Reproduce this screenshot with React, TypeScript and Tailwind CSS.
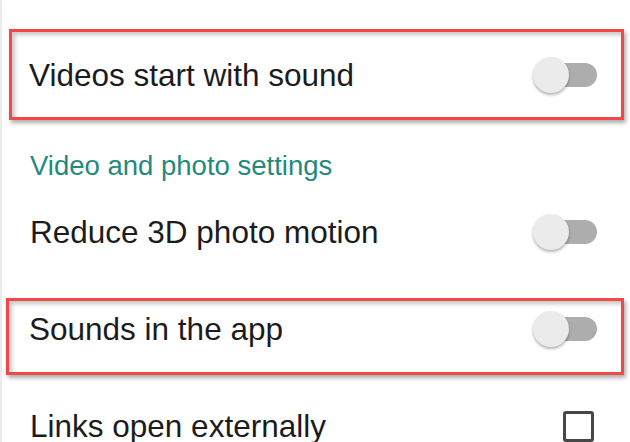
import React from 'react';

function Toggle() {
  return (
    <div className="relative w-[64px] h-[36px] flex-shrink-0">
      <div className="absolute left-[12px] top-[6px] w-[52px] h-[24px] rounded-full bg-[#adadad]" />
      <div className="absolute left-0 top-0 w-[36px] h-[36px] rounded-full bg-[#ebebeb] shadow-[0_2px_3px_rgba(0,0,0,0.3)]" />
    </div>
  );
}

function Checkbox() {
  return (
    <div className="w-[31px] h-[31px] mr-[3px] rounded-[3px] border-[3px] border-[#474747] flex-shrink-0" />
  );
}

const boxShadow = 'shadow-[2px_3px_4px_rgba(0,0,0,0.32),inset_3px_3px_4px_rgba(0,0,0,0.22)]';

export default function App() {
  return (
    <div
      className="w-[630px] h-[442px] overflow-hidden bg-white border-l-2 border-[#ececec] text-[#1c1c1c]"
      style={{ fontFamily: '"Liberation Sans", Arial, sans-serif' }}
    >
      {/* Videos start with sound (highlighted) */}
      <div className={`mt-[29px] ml-[7px] mr-[6px] h-[91px] border-[3px] border-[#f24848] ${boxShadow} flex items-center justify-between pl-[17px] pr-[24px]`}>
        <span className="text-[31.5px] leading-[40px]">Videos start with sound</span>
        <Toggle />
      </div>

      {/* Section heading */}
      <div className="mt-[28px] h-[36px] pl-[28px] text-[27.5px] leading-[36px] text-[#1f8b7d]">
        Video and photo settings
      </div>

      {/* Reduce 3D photo motion */}
      <div className="h-[96px] flex items-center justify-between pl-[28px] pr-[33px]">
        <span className="text-[31.5px] leading-[40px]">Reduce 3D photo motion</span>
        <Toggle />
      </div>

      {/* Sounds in the app (highlighted) */}
      <div className={`mt-[18px] ml-[4px] mr-[6px] h-[77px] border-[3px] border-[#f24848] ${boxShadow} pt-[8px] pl-[20px] pr-[24px]`}>
        <div className="h-[40px] flex items-center justify-between">
          <span className="text-[31.5px] leading-[40px]">Sounds in the app</span>
          <Toggle />
        </div>
      </div>

      {/* Links open externally */}
      <div className="mt-[31px] h-[40px] flex items-center justify-between pl-[28px] pr-[33px]">
        <span className="text-[31.5px] leading-[40px]">Links open externally</span>
        <Checkbox />
      </div>
    </div>
  );
}
